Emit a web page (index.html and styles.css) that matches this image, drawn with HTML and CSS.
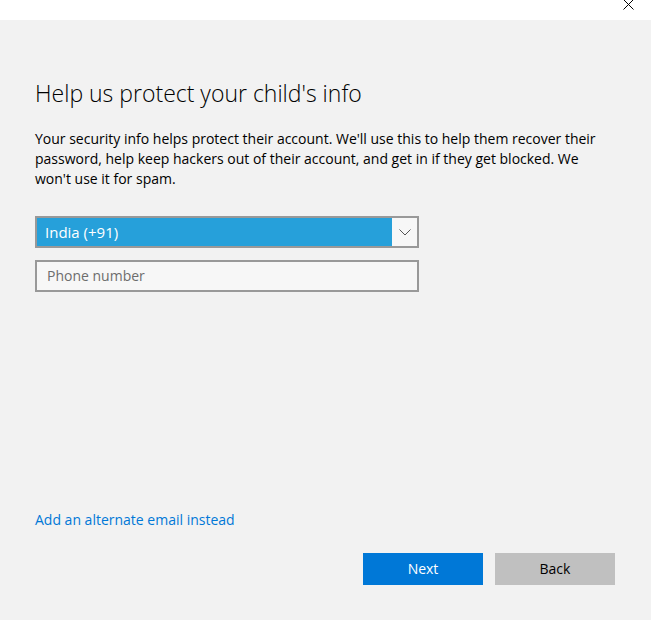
FILE: index.html
```html
<!DOCTYPE html>
<html lang="en">
<head>
<meta charset="utf-8">
<title>Help us protect your child's info</title>
<link rel="stylesheet" href="styles.css">
</head>
<body>
<div class="window">
  <div class="titlebar">
    <button class="close" aria-label="Close">
      <svg width="11" height="11" viewBox="0 0 11 11"><path d="M0.5 0.5 L10.5 10.5 M10.5 0.5 L0.5 10.5" stroke="#000" stroke-width="1" fill="none"/></svg>
    </button>
  </div>
  <main class="content">
    <h1 class="title">Help us protect your child's info</h1>
    <p class="desc">Your security info helps protect their account. We'll use this to help them recover their password, help keep hackers out of their account, and get in if they get blocked. We won't use it for spam.</p>
    <div class="select">
      <span class="select-value">India (+91)</span>
      <span class="select-arrow">
        <svg width="12" height="7" viewBox="0 0 12 7"><path d="M0.5 0.5 L6 6 L11.5 0.5" stroke="#555" stroke-width="1" fill="none"/></svg>
      </span>
    </div>
    <div class="input"><span class="placeholder">Phone number</span></div>
    <div class="spacer"></div>
    <a class="link" href="#">Add an alternate email instead</a>
    <div class="actions">
      <button class="btn btn-primary">Next</button>
      <button class="btn btn-secondary">Back</button>
    </div>
  </main>
</div>
</body>
</html>
```
FILE: styles.css
```css
* { box-sizing: border-box; }
html, body { margin: 0; padding: 0; }
body {
  font-family: "Open Sans", "Noto Sans", sans-serif;
  background: #f2f2f2;
  color: #000;
  width: 651px;
  height: 620px;
  overflow: hidden;
}
.window {
  display: flex;
  flex-direction: column;
  height: 620px;
}
.titlebar {
  height: 20px;
  background: #fff;
  display: flex;
  justify-content: flex-end;
}
.close {
  border: 0;
  background: transparent;
  padding: 0;
  width: 46px;
  height: 20px;
  display: flex;
  align-items: flex-start;
  justify-content: center;
}
.close svg { margin-top: -1px; margin-left: 0; }
.content {
  flex: 1;
  display: flex;
  flex-direction: column;
  padding: 0 36px 0 35px;
}
.title {
  margin: 57px 0 0 0;
  font-size: 23px;
  font-weight: 300;
  line-height: 32px;
  color: #000;
}
.desc {
  margin: 20px 0 0 0;
  font-size: 14px;
  line-height: 20px;
  width: 580px;
}
.select {
  margin-top: 27px;
  width: 384px;
  height: 32px;
  border: 2px solid #999;
  display: flex;
  background: #f7f7f7;
}
.select-value {
  flex: 1;
  background: #26a0da;
  color: #fff;
  font-size: 15px;
  line-height: 28px;
  padding-left: 8px;
}
.select-arrow {
  width: 25px;
  display: flex;
  align-items: center;
  justify-content: center;
}
.input {
  margin-top: 12px;
  width: 384px;
  height: 32px;
  border: 2px solid #999;
  background: #f7f7f7;
  padding-left: 10px;
}
.placeholder {
  color: #6d6d6d;
  font-size: 14px;
  line-height: 28px;
}
.spacer { flex: 1; }
.link {
  color: #0078d7;
  text-decoration: none;
  font-size: 14px;
  line-height: 20px;
}
.actions {
  margin-top: 23px;
  margin-bottom: 35px;
  display: flex;
  justify-content: flex-end;
  gap: 12px;
}
.btn {
  width: 120px;
  height: 32px;
  border: 0;
  font-family: inherit;
  font-size: 14px;
  padding: 0 0 2px 0;
}
.btn-primary { background: #0078d7; color: #fff; }
.btn-secondary { background: #c0c0c0; color: #000; }
```
